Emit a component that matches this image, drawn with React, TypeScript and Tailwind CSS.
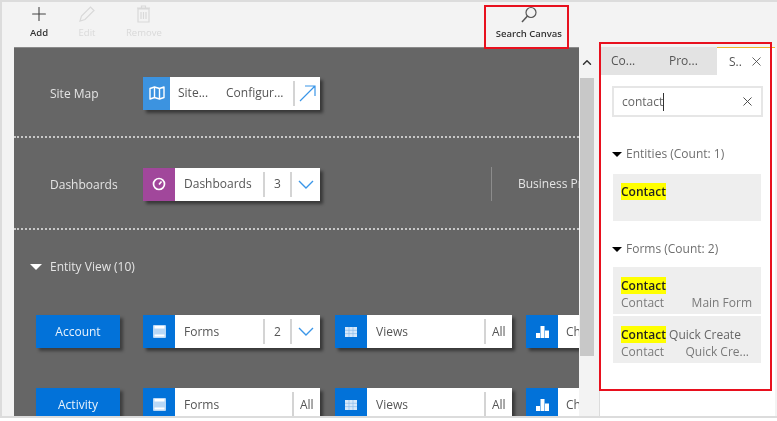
import { ChevronUp, Plus, X } from "lucide-react";
import type { ReactNode } from "react";

const font = "font-['Open_Sans','Noto_Sans',sans-serif]";

function ToolButton({ icon, label, dim }: { icon: ReactNode; label: string; dim?: boolean }) {
  return (
    <div className="flex flex-col items-center">
      <div className="flex h-[24px] items-center">{icon}</div>
      <span className={`mt-[1px] text-[9.5px] leading-[12px] ${dim ? "text-[#d9d9d9]" : "font-semibold text-[#333]"}`}>
        {label}
      </span>
    </div>
  );
}

function MapIcon() {
  return (
    <svg width="16" height="14" viewBox="0 0 16 14" fill="none" stroke="white" strokeWidth="1.4" strokeLinejoin="round">
      <path d="M1 2.5 5.5 1l5 1.500L15 1v10.500L10.500 13l-5-1.500L1 13z" />
      <path d="M5.500 1v10.500M10.500 2.500V13" />
    </svg>
  );
}

function GaugeIcon() {
  return (
    <svg width="14" height="14" viewBox="0 0 14 14" fill="none" stroke="white" strokeWidth="1.700">
      <circle cx="7" cy="7" r="5.500" />
      <path d="M7 7.500 9.500 4.500" />
    </svg>
  );
}

function FormIcon() {
  return (
    <svg width="13" height="13" viewBox="0 0 13 13">
      <rect width="13" height="13" rx="1" fill="#b9d8f6" />
      <rect x="1.500" y="1" width="10" height="2.500" fill="#ffffff" />
      <rect x="1.500" y="9.500" width="10" height="2" fill="#ffffff" />
    </svg>
  );
}

function GridIcon() {
  return (
    <svg width="12" height="10" viewBox="0 0 12 10">
      <rect width="12" height="10" fill="#d6e8fa" />
      <path d="M0 3.300h12M0 6.600h12M4 0v10M8 0v10" stroke="#8dbdec" strokeWidth="0.700" />
    </svg>
  );
}

function ChartIcon() {
  return (
    <svg width="13" height="12" viewBox="0 0 13 12" fill="white">
      <rect x="0" y="7" width="4" height="5" />
      <rect x="4.500" y="0" width="4" height="12" />
      <rect x="9" y="4.500" width="4" height="7.500" />
    </svg>
  );
}

function LinkArrow() {
  return (
    <svg width="17" height="17" viewBox="0 0 17 17" fill="none" stroke="#3a96e8" strokeWidth="1.200">
      <path d="M1 16 16 1M6 1h10v10" />
    </svg>
  );
}

function Chevron() {
  return (
    <svg width="16" height="9" viewBox="0 0 16 9" fill="none" stroke="#3a96e8" strokeWidth="1.400">
      <path d="M1 1l7 7 7-7" />
    </svg>
  );
}

function Divider() {
  return <span className="h-[25px] w-[2px] shrink-0 bg-[#d4d4d4]" />;
}

function Card({
  icon,
  color,
  iconWidth = "w-[32px]",
  children,
}: {
  icon: ReactNode;
  color: string;
  iconWidth?: string;
  children: ReactNode;
}) {
  return (
    <div className="flex h-[33px] w-[177px] shrink-0 items-center bg-white text-[12px] font-medium text-[#555] shadow-[3px_3px_3px_rgba(0,0,0,0.45)]">
      <div className={`flex h-full shrink-0 items-center justify-center ${iconWidth} ${color}`}>{icon}</div>
      {children}
    </div>
  );
}

function CountCard({ icon, label, count }: { icon: ReactNode; label: string; count?: string }) {
  return (
    <Card icon={icon} color="bg-[#0272d9]">
      <span className="ml-[9px] flex-1">{label}</span>
      {count ? (
        <>
          <Divider />
          <span className="w-[25px] text-center">{count}</span>
          <Divider />
          <span className="flex w-[28px] justify-center">
            <Chevron />
          </span>
        </>
      ) : (
        <>
          <Divider />
          <span className="w-[26px] pl-[6px]">All</span>
        </>
      )}
    </Card>
  );
}

function EntityRow({ name, forms }: { name: string; forms?: string }) {
  return (
    <div className="flex h-[33px] items-center pl-[22px]">
      <div className="flex h-[33px] w-[84px] shrink-0 items-center justify-center bg-[#0272d9] text-[12px] font-medium text-[#e8f2fb] shadow-[3px_3px_3px_rgba(0,0,0,0.4)]">
        {name}
      </div>
      <div className="ml-[23px]">
        <CountCard icon={<FormIcon />} label="Forms" count={forms} />
      </div>
      <div className="ml-[15px]">
        <CountCard icon={<GridIcon />} label="Views" />
      </div>
      <div className="ml-[14px]">
        <Card icon={<ChartIcon />} color="bg-[#0272d9]">
          <span className="ml-[8px]">Charts</span>
        </Card>
      </div>
    </div>
  );
}

function Hit({ children }: { children: string }) {
  return <span className="bg-[#ffff00] font-semibold text-[#222]">{children}</span>;
}

function ResultHeading({ children }: { children: string }) {
  return (
    <div className="flex h-[16px] items-center pl-[12px] text-[12px] font-medium text-[#6f6f6f]">
      <span className="mr-[4px] h-0 w-0 border-x-[5.500px] border-t-[5px] border-x-transparent border-t-black" />
      {children}
    </div>
  );
}

export default function App() {
  return (
    <div className={`relative h-[421px] w-[777px] overflow-hidden bg-white blur-[0.4px] ${font}`}>
      <div className="flex h-[418px] flex-col border-l-2 border-t-2 border-b-2 border-[#dcdcdc] bg-[#f3f3f3]">
        {/* toolbar */}
        <div className="relative flex h-[45px] shrink-0 items-start pl-[26px]">
          <ToolButton icon={<Plus size={22} strokeWidth={1.200} className="text-[#444]" />} label="Add" />
          <div className="ml-[28px]">
            <ToolButton
              dim
              label="Edit"
              icon={
                <svg width="18" height="18" viewBox="0 0 18 18" fill="none" stroke="#d9d9d9" strokeWidth="1.200">
                  <path d="M2 16 3.500 11 12.500 2 16 5.500 7 14.500Z" />
                </svg>
              }
            />
          </div>
          <div className="ml-[30px]">
            <ToolButton
              dim
              label="Remove"
              icon={
                <svg width="13" height="18" viewBox="0 0 13 18" fill="none" stroke="#d9d9d9" strokeWidth="1.200">
                  <path d="M1 4h11v13H1zM0 3h13M4.500 3V1h4v2M4 7v7M6.500 7v7M9 7v7" />
                </svg>
              }
            />
          </div>
          <div className="ml-auto mr-[215px] pt-[1px]">
            <ToolButton
              label="Search Canvas"
              icon={
                <svg width="18" height="18" viewBox="0 0 18 18" fill="none" stroke="#555" strokeWidth="1.200">
                  <circle cx="11" cy="6.500" r="5" />
                  <path d="M7.500 10 2 16" strokeWidth="1.500" />
                </svg>
              }
            />
          </div>
        </div>

        <div className="flex min-h-0 flex-1">
          {/* canvas */}
          <div className="ml-[12px] flex w-[565px] shrink-0 flex-col overflow-hidden border-t border-[#8a8a8a] bg-[#666666] text-[12px] text-[#e4e4e4]">
            <div className="flex h-[88px] shrink-0 items-center pl-[36px] pt-[2px]">
              <span className="mt-[2px] w-[93px] shrink-0">Site Map</span>
              <Card icon={<MapIcon />} color="bg-[#3c93e0]" iconWidth="w-[27px]">
                <span className="ml-[8px] w-[48px]">Site...</span>
                <span className="w-[67px]">Configur...</span>
                <Divider />
                <span className="flex flex-1 justify-center">
                  <LinkArrow />
                </span>
              </Card>
            </div>
            <div className="h-0 shrink-0 border-t-2 border-dotted border-[#c8c8c8]" />
            <div className="flex h-[90px] shrink-0 items-center pl-[36px] pt-[2px]">
              <span className="mt-[2px] w-[93px] shrink-0">Dashboards</span>
              <Card icon={<GaugeIcon />} color="bg-[#a1479b]">
                <span className="ml-[9px] flex-1">Dashboards</span>
                <Divider />
                <span className="w-[25px] text-center">3</span>
                <Divider />
                <span className="flex w-[28px] justify-center">
                  <Chevron />
                </span>
              </Card>
              <span className="ml-[171px] h-[34px] w-px shrink-0 bg-[#8c8c8c]" />
              <span className="ml-[26px] whitespace-nowrap">Business Process Flows</span>
            </div>
            <div className="h-0 shrink-0 border-t-2 border-dotted border-[#c8c8c8]" />
            <div className="mt-[29px] flex h-[16px] shrink-0 items-center pl-[16px] font-medium">
              <span className="mr-[8px] h-0 w-0 border-x-[6.500px] border-t-[6px] border-x-transparent border-t-white" />
              Entity View (10)
            </div>
            <div className="mt-[40px] flex flex-col gap-[40px]">
              <EntityRow name="Account" forms="2" />
              <EntityRow name="Activity" />
            </div>
          </div>

          {/* scrollbar */}
          <div className="flex w-[20px] shrink-0 flex-col items-start pl-[1px]">
            <div className="flex h-[31px] w-[14px] items-center justify-center">
              <ChevronUp size={15} strokeWidth={2.500} className="text-[#333]" />
            </div>
            <div className="h-[278px] w-[14px] bg-[#c8c8c8]" />
          </div>

          {/* side panel */}
          <div className="mr-[2px] flex min-w-0 flex-1 flex-col border-l border-[#dcdcdc] bg-white">
            <div className="flex h-[28px] shrink-0 text-[12px] font-medium text-[#555]">
              <div className="flex w-[117px] items-center bg-[#e3e3e3]">
                <span className="ml-[11px] w-[58px]">Co...</span>
                <span>Pro...</span>
              </div>
              <div className="flex flex-1 items-center border-t border-[#f0b429]">
                <span className="ml-[12px]">S..</span>
                <X size={15} strokeWidth={1.300} className="ml-auto mr-[11px] text-[#444]" />
              </div>
            </div>
            <div className="ml-[12px] mt-[11px] flex h-[31px] w-[151px] shrink-0 items-center border-2 border-[#e6e6e6] pl-[8px] pr-[6px] text-[12px] font-medium text-[#666]">
              <span className="border-r border-[#333]">contact</span>
              <X size={15} strokeWidth={1.500} className="ml-auto text-[#444]" />
            </div>
            <div className="mt-[29px]">
              <ResultHeading>Entities (Count: 1)</ResultHeading>
            </div>
            <div className="ml-[13px] mt-[12px] h-[47px] w-[148px] shrink-0 bg-[#eeeeee] pl-[8px] pt-[9px] text-[12px] leading-[17px]">
              <Hit>Contact</Hit>
            </div>
            <div className="mt-[20px]">
              <ResultHeading>Forms (Count: 2)</ResultHeading>
            </div>
            <div className="ml-[13px] mt-[10px] flex w-[148px] flex-col gap-[2px] text-[12px] leading-[17px]">
              <div className="h-[47px] bg-[#eeeeee] px-[8px] pt-[10px]">
                <div>
                  <Hit>Contact</Hit>
                </div>
                <div className="flex justify-between text-[#7a7a7a]">
                  <span>Contact</span>
                  <span className="mr-[1px]">Main Form</span>
                </div>
              </div>
              <div className="h-[47px] bg-[#eeeeee] px-[8px] pt-[10px]">
                <div className="font-medium text-[#666]">
                  <Hit>Contact</Hit> Quick Create
                </div>
                <div className="flex justify-between text-[#7a7a7a]">
                  <span>Contact</span>
                  <span className="mr-[4px]">Quick Cre...</span>
                </div>
              </div>
            </div>
          </div>
        </div>
      </div>

      {/* red callouts drawn over the screenshot */}
      <div className="absolute left-[484px] top-[5px] h-[44px] w-[85px] border-2 border-[#e8101e]" />
      <div className="absolute left-[599px] top-[42px] h-[349px] w-[173px] border-2 border-[#e8101e]" />
    </div>
  );
}
